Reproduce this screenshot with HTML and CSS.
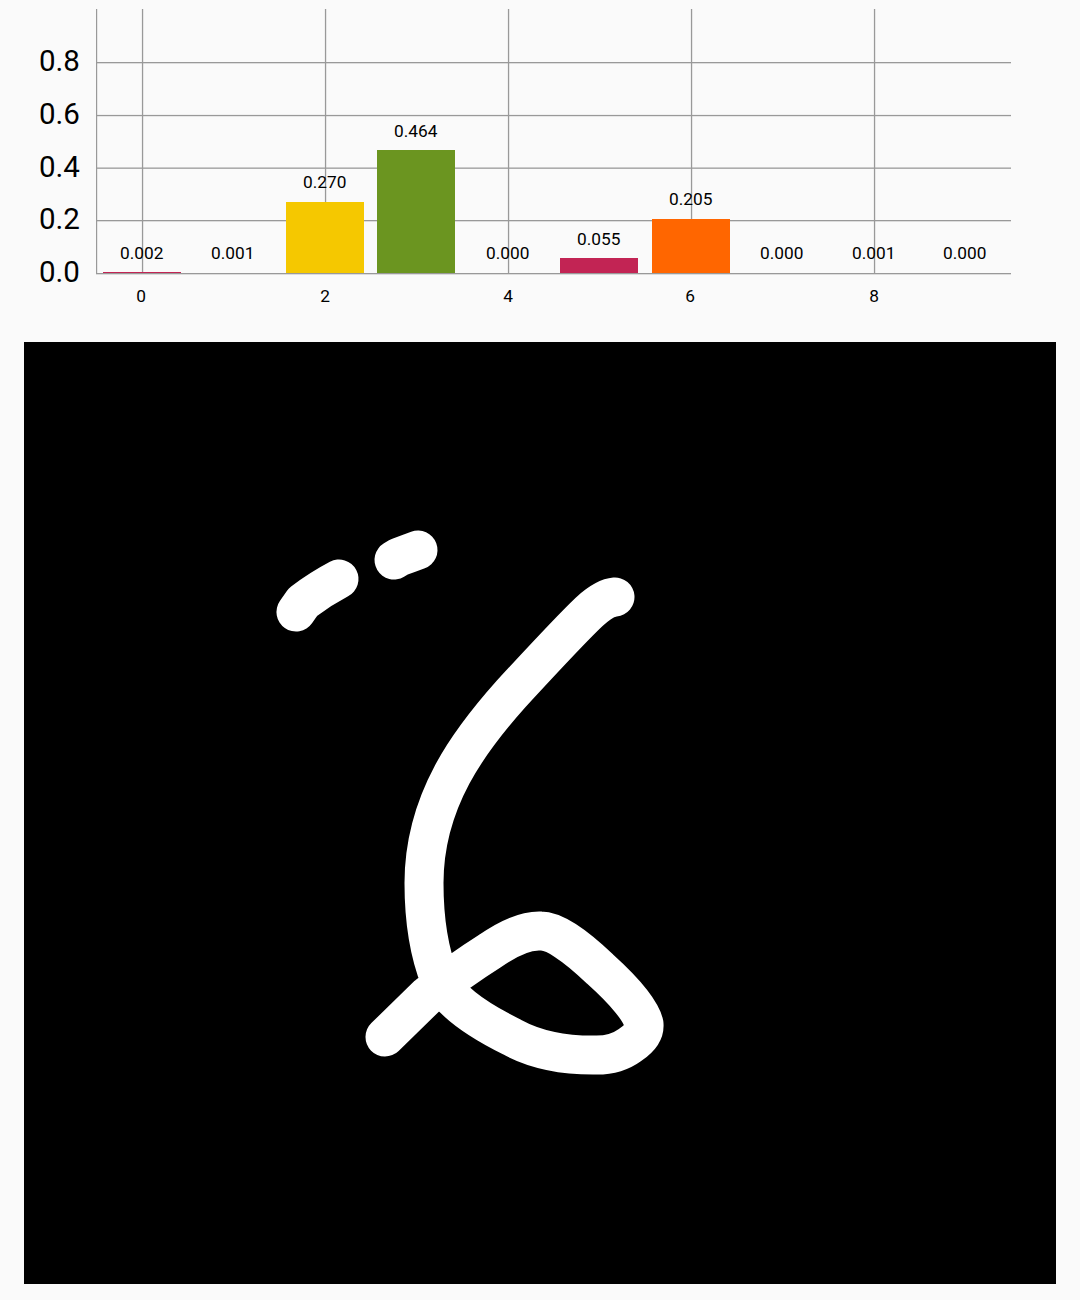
FILE: index.html
```html
<!DOCTYPE html>
<html lang="en">
<head>
    <meta charset="UTF-8">
    <meta name="viewport" content="width=device-width, initial-scale=1.0">
    <title>Digit Prediction</title>
    <link rel="stylesheet" href="styles.css">
</head>
<body>
    <svg class="chart" viewBox="0 0 1080 342" width="1080" height="342">
        <g class="grid">
            <rect x="96" y="9" width="1.2" height="265"/>
            <rect x="141.9" y="9" width="1.3" height="265"/>
            <rect x="324.9" y="9" width="1.3" height="265"/>
            <rect x="507.9" y="9" width="1.3" height="265"/>
            <rect x="690.9" y="9" width="1.3" height="265"/>
            <rect x="873.9" y="9" width="1.3" height="265"/>
            <rect x="96" y="62" width="915" height="1.3"/>
            <rect x="96" y="114.9" width="915" height="1.3"/>
            <rect x="96" y="167.5" width="915" height="1.3"/>
            <rect x="96" y="220" width="915" height="1.3"/>
            <rect x="96" y="273" width="915" height="1.3"/>
        </g>
        <g>
            <rect class="bar-crimson" x="103" y="272" width="78" height="1"/>
            <rect class="bar-yellow" x="286" y="202" width="78" height="71"/>
            <rect class="bar-green" x="377" y="150" width="78" height="123"/>
            <rect class="bar-crimson" x="560" y="258" width="78" height="15"/>
            <rect class="bar-orange" x="652" y="219" width="78" height="54"/>
        </g>
        <g class="y-label">
            <text x="39" y="71">0.8</text>
            <text x="39" y="124">0.6</text>
            <text x="39" y="176.5">0.4</text>
            <text x="39" y="229">0.2</text>
            <text x="39" y="282">0.0</text>
        </g>
        <g class="value-label">
            <text x="141.7" y="259">0.002</text>
            <text x="232.7" y="259">0.001</text>
            <text x="324.7" y="188">0.270</text>
            <text x="415.7" y="137">0.464</text>
            <text x="507.7" y="259">0.000</text>
            <text x="598.7" y="245">0.055</text>
            <text x="690.7" y="205">0.205</text>
            <text x="781.7" y="259">0.000</text>
            <text x="873.7" y="259">0.001</text>
            <text x="964.7" y="259">0.000</text>
        </g>
        <g class="x-label">
            <text x="141" y="302">0</text>
            <text x="325" y="302">2</text>
            <text x="508" y="302">4</text>
            <text x="690" y="302">6</text>
            <text x="874" y="302">8</text>
        </g>
    </svg>

    <div class="canvas-wrap">
        <svg class="drawing" viewBox="24 342 1032 942" width="1032" height="942">
            <path d="M296 612 L303 602 Q320 589 339 579"/>
            <path d="M394 560 L399 557 Q410 553 418 550"/>
            <path d="M615 597 Q604 598 589 612 Q570 630 511 694 C470 740 424 800 424 883 Q424 940 440 980 Q453 1008 512 1037 Q545 1055 593 1055 Q615 1056 630 1045 Q645 1035 644 1024 Q640 1005 600 969 Q560 931 541 931 Q520 930 490 951 Q460 970 428 995 L385 1037"/>
        </svg>
    </div>
</body>
</html>
```

FILE: styles.css
```css
body {
    margin: 0;
    background-color: #fafafa;
    font-family: Roboto, sans-serif;
}
.chart {
    display: block;
}
.grid rect {
    fill: #999;
}
.bar-crimson {
    fill: #c22454;
}
.bar-yellow {
    fill: #f5c800;
}
.bar-green {
    fill: #6b9520;
}
.bar-orange {
    fill: #ff6600;
}
.y-label text {
    font-size: 29.5px;
    fill: #000;
}
.value-label text {
    font-size: 17.3px;
    text-anchor: middle;
    fill: #000;
}
.x-label text {
    font-size: 17.3px;
    text-anchor: middle;
    fill: #000;
}
.canvas-wrap {
    margin: 0 24px;
    height: 942px;
    background-color: #000;
}
.drawing {
    display: block;
}
.drawing path {
    fill: none;
    stroke: #fff;
    stroke-width: 39;
    stroke-linecap: round;
    stroke-linejoin: round;
}
```
